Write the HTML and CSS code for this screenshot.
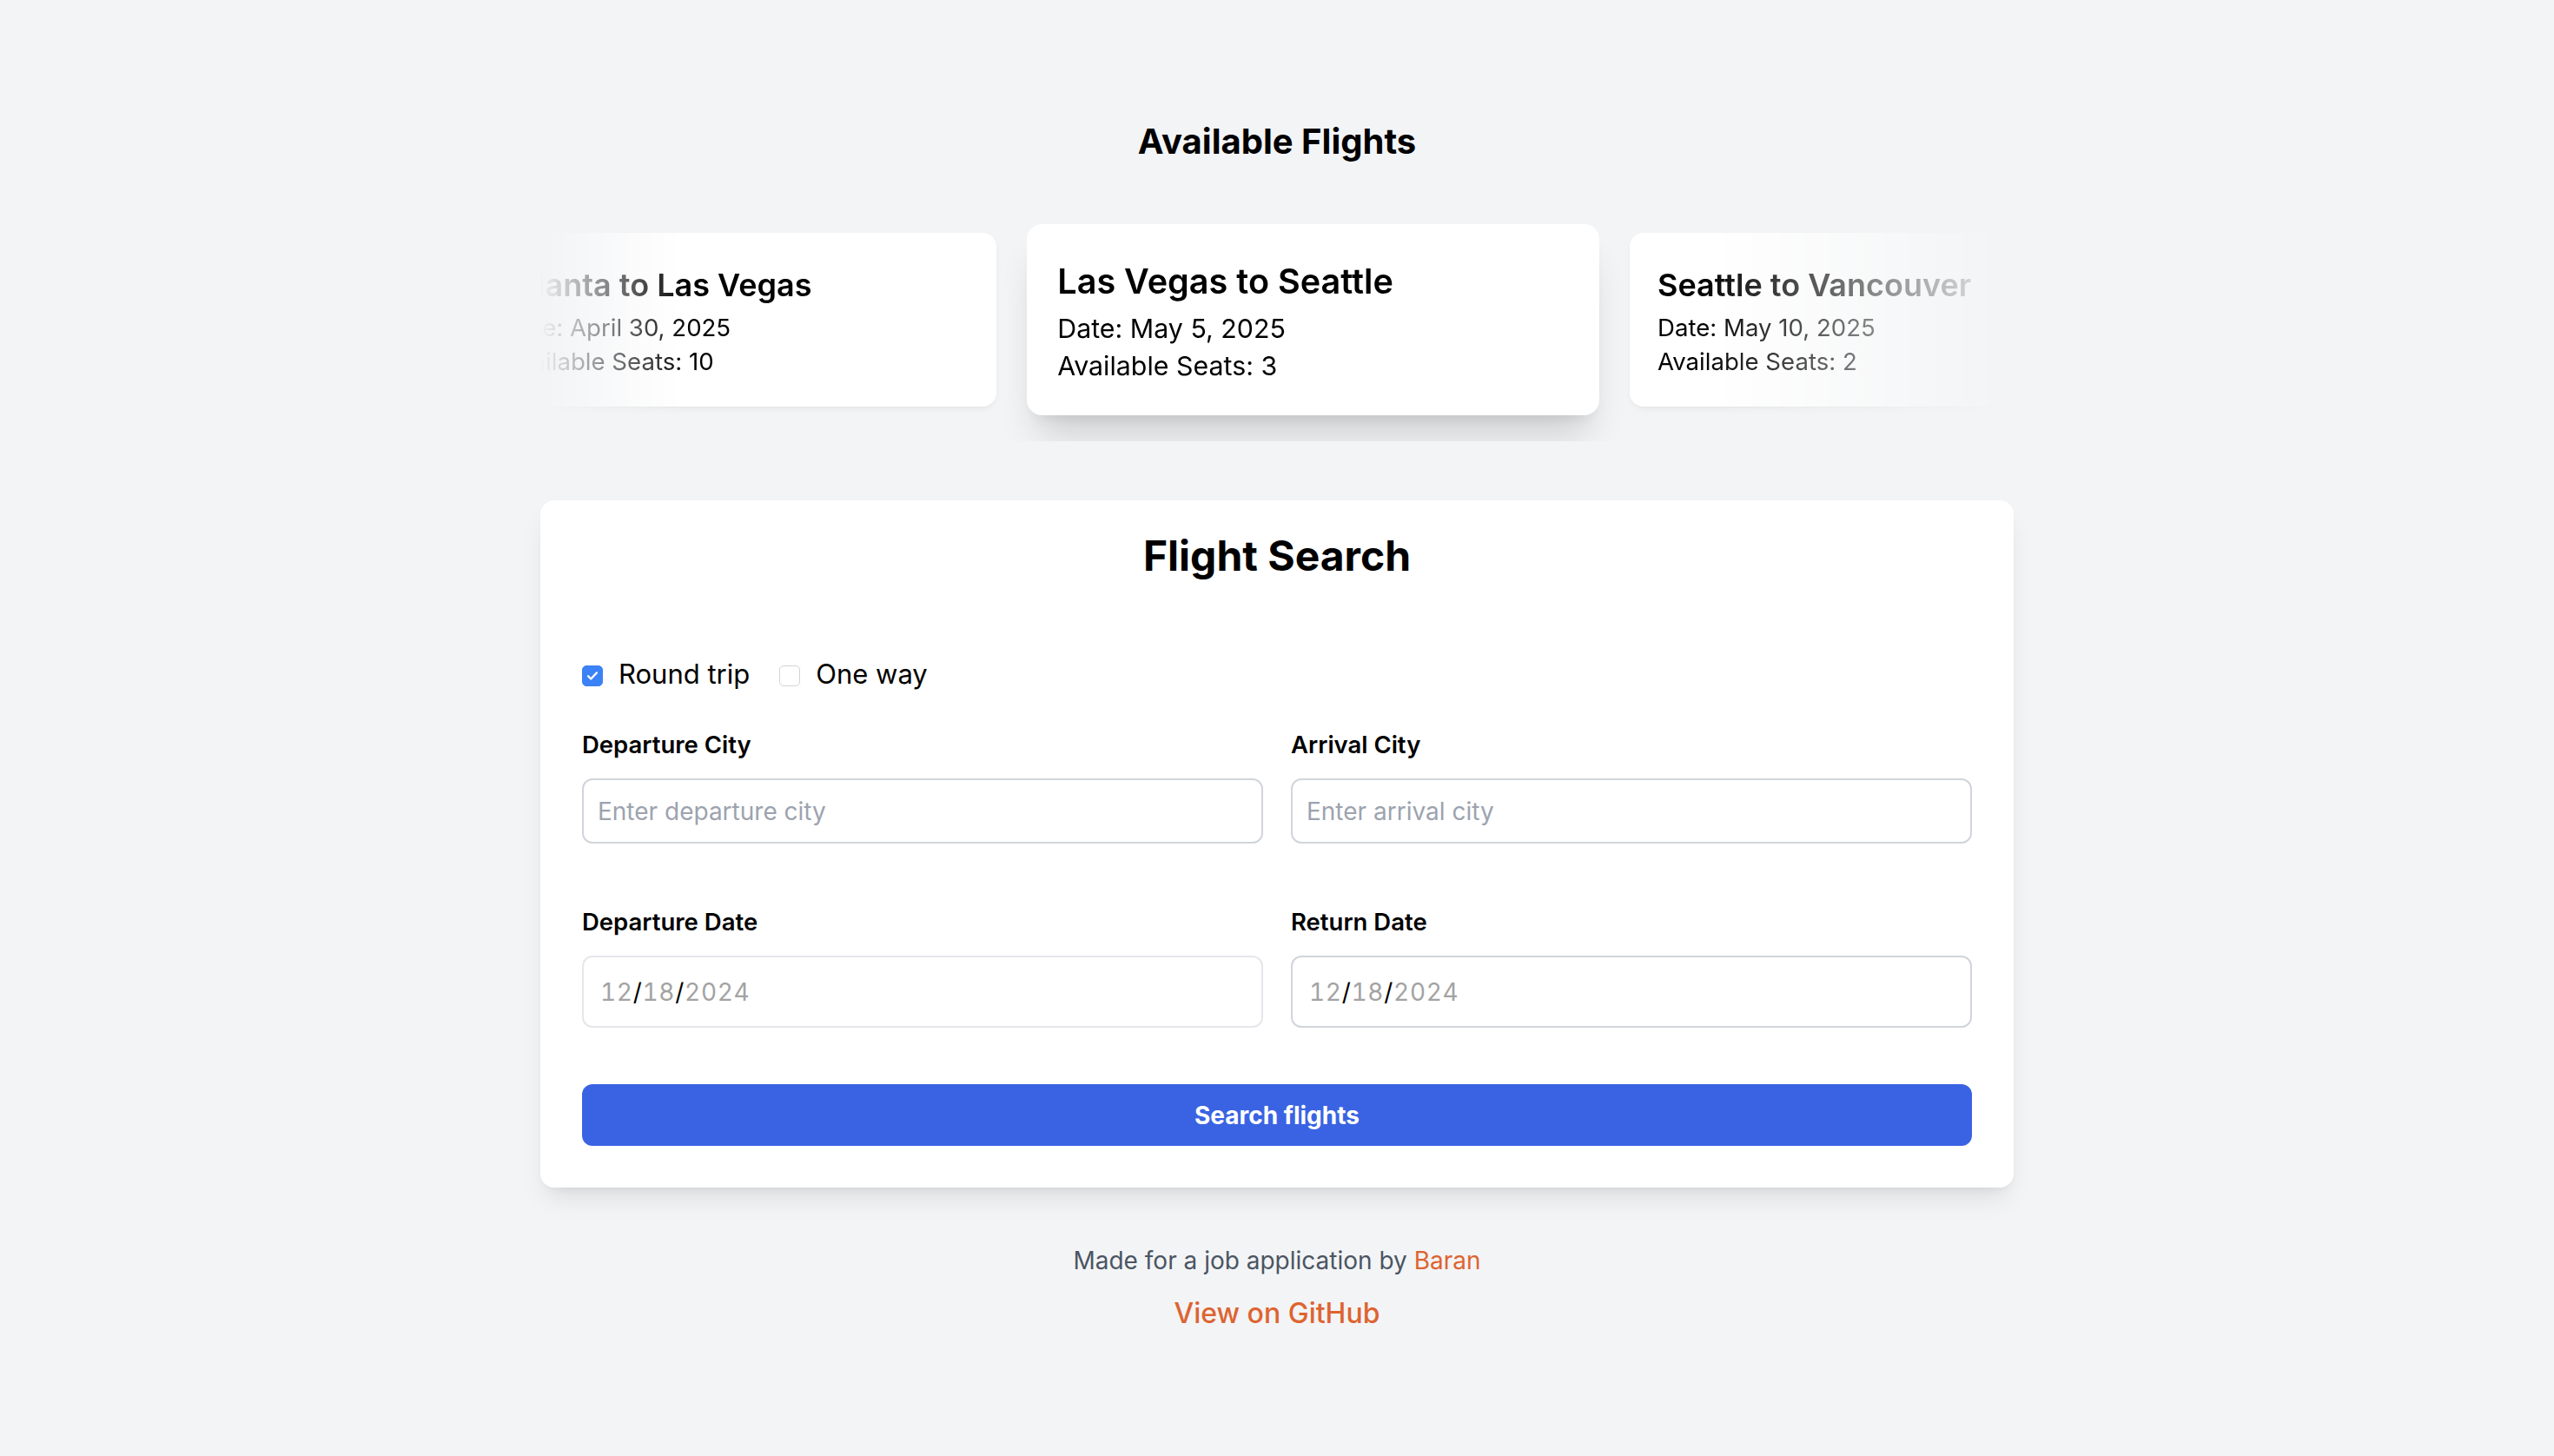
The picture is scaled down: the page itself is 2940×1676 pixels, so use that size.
FILE: index.html
```html
<!DOCTYPE html>
<html lang="en">
<head>
<meta charset="utf-8">
<title>Flight Search</title>
<link rel="stylesheet" href="styles.css">
</head>
<body>
<main class="page">
  <section class="flights">
    <h2 class="flights-title">Available Flights</h2>
    <div class="carousel">
      <div class="track">
        <article class="flight-card">
          <h3 class="flight-route">Atlanta to Las Vegas</h3>
          <p class="flight-info">Date: April 30, 2025</p>
          <p class="flight-info">Available Seats: 10</p>
        </article>
        <article class="flight-card active">
          <h3 class="flight-route">Las Vegas to Seattle</h3>
          <p class="flight-info">Date: May 5, 2025</p>
          <p class="flight-info">Available Seats: 3</p>
        </article>
        <article class="flight-card">
          <h3 class="flight-route">Seattle to Vancouver</h3>
          <p class="flight-info">Date: May 10, 2025</p>
          <p class="flight-info">Available Seats: 2</p>
        </article>
      </div>
    </div>
  </section>

  <section class="search-card">
    <h1 class="search-title">Flight Search</h1>
    <div class="trip-type">
      <label class="check">
        <span class="box checked"><svg viewBox="0 0 24 24" width="18" height="18"><path d="M5.5 12.5l4.2 4.2 8.8-9.4" fill="none" stroke="#fff" stroke-width="3.2" stroke-linecap="round" stroke-linejoin="round"/></svg></span>
        <span class="check-text">Round trip</span>
      </label>
      <label class="check">
        <span class="box"></span>
        <span class="check-text">One way</span>
      </label>
    </div>
    <div class="grid">
      <div class="field">
        <label class="field-label">Departure City</label>
        <div class="text-input"><span class="placeholder">Enter departure city</span></div>
      </div>
      <div class="field">
        <label class="field-label">Arrival City</label>
        <div class="text-input"><span class="placeholder">Enter arrival city</span></div>
      </div>
      <div class="field">
        <label class="field-label">Departure Date</label>
        <div class="date-input light"><span class="dd">12</span><span class="sl">/</span><span class="dd">18</span><span class="sl">/</span><span class="dd">2024</span></div>
      </div>
      <div class="field">
        <label class="field-label">Return Date</label>
        <div class="date-input"><span class="dd">12</span><span class="sl">/</span><span class="dd">18</span><span class="sl">/</span><span class="dd">2024</span></div>
      </div>
    </div>
    <button class="search-btn">Search flights</button>
  </section>

  <footer class="footer">
    <p class="credit">Made for a job application by <a class="orange">Baran</a></p>
    <a class="github">View on GitHub</a>
  </footer>
</main>
</body>
</html>
```

FILE: styles.css
```css
* { box-sizing: border-box; }
html, body { margin: 0; padding: 0; }
body {
  background: #f3f4f6;
  font-family: Inter, "Noto Sans", "Liberation Sans", sans-serif;
  color: #000;
  min-height: 1676px;
}
.page {
  width: 1696px;
  margin: 0 auto;
  padding-top: 135px;
}
.flights-title {
  margin: 0 0 37px;
  font-size: 40px;
  line-height: 56px;
  font-weight: 700;
  text-align: center;
}
.carousel {
  padding: 40px 0;
  overflow: hidden;
  -webkit-mask-image: linear-gradient(to right, transparent 0, #000 170px, #000 calc(100% - 360px), transparent 100%);
  mask-image: linear-gradient(to right, transparent 0, #000 170px, #000 calc(100% - 360px), transparent 100%);
}
.track {
  display: flex;
  gap: 65px;
  margin-left: -74px;
}
.flight-card {
  flex: 0 0 599px;
  background: #fff;
  border-radius: 16px;
  padding: 32px;
  box-shadow: 0 4px 10px -2px rgba(0,0,0,0.06), 0 2px 4px -2px rgba(0,0,0,0.05);
}
.flight-card.active {
  transform: scale(1.1);
  box-shadow: 0 30px 40px -12px rgba(0,0,0,0.16), 0 10px 16px -8px rgba(0,0,0,0.08);
}
.flight-route {
  margin: 0 0 2px;
  font-size: 36px;
  line-height: 56px;
  font-weight: 600;
}
.flight-info {
  margin: 0;
  font-size: 27.6px;
  line-height: 39px;
}
.search-card {
  margin-top: 68px;
  background: #fff;
  border-radius: 16px;
  padding: 48px;
  box-shadow: 0 18px 30px -8px rgba(0,0,0,0.10), 0 6px 12px -6px rgba(0,0,0,0.08);
}
.search-title {
  margin: 0 0 100px;
  font-size: 48px;
  line-height: 32px;
  font-weight: 700;
  text-align: center;
}
.trip-type {
  display: flex;
  align-items: center;
  height: 40px;
  gap: 34px;
}
.check {
  display: flex;
  align-items: center;
  gap: 18px;
}
.box {
  width: 24px;
  height: 24px;
  border-radius: 5px;
  border: 1.5px solid #d4d4d8;
  background: #fff;
  display: flex;
  align-items: center;
  justify-content: center;
  margin-top: 3px;
}
.box.checked {
  background: #3b82f6;
  border-color: #3b82f6;
}
.check-text {
  font-size: 31px;
  line-height: 40px;
}
.grid {
  margin-top: 41px;
  display: grid;
  grid-template-columns: 1fr 1fr;
  column-gap: 32px;
  row-gap: 70px;
}
.field-label {
  display: block;
  font-size: 27.5px;
  line-height: 40px;
  font-weight: 600;
  margin-bottom: 19px;
}
.text-input {
  height: 75px;
  border: 2px solid #d1d5db;
  border-radius: 12px;
  padding: 0 16px;
  display: flex;
  align-items: center;
}
.placeholder {
  font-size: 28px;
  color: #9ca3af;
}
.date-input {
  height: 83px;
  border: 2px solid #d1d5db;
  border-radius: 12px;
  padding: 0 19px;
  display: flex;
  align-items: center;
  font-size: 28px;
  font-variant-numeric: tabular-nums;
  letter-spacing: 0.7px;
}
.date-input.light { border-color: #e5e7eb; }
.dd { color: #a3a3a3; }
.sl { color: #000; }
.search-btn {
  display: block;
  width: 100%;
  margin-top: 65px;
  height: 71px;
  border: 0;
  border-radius: 12px;
  background: #3a63e3;
  color: #fff;
  font-family: inherit;
  font-size: 28px;
  font-weight: 700;
}
.footer {
  text-align: center;
  margin-top: 62px;
}
.credit {
  margin: 0;
  font-size: 28px;
  line-height: 44px;
  color: #4b5563;
}
.orange { color: #dd6430; }
.github {
  display: inline-block;
  margin-top: 15px;
  font-size: 32px;
  line-height: 48px;
  font-weight: 500;
  color: #dd6430;
}
```
